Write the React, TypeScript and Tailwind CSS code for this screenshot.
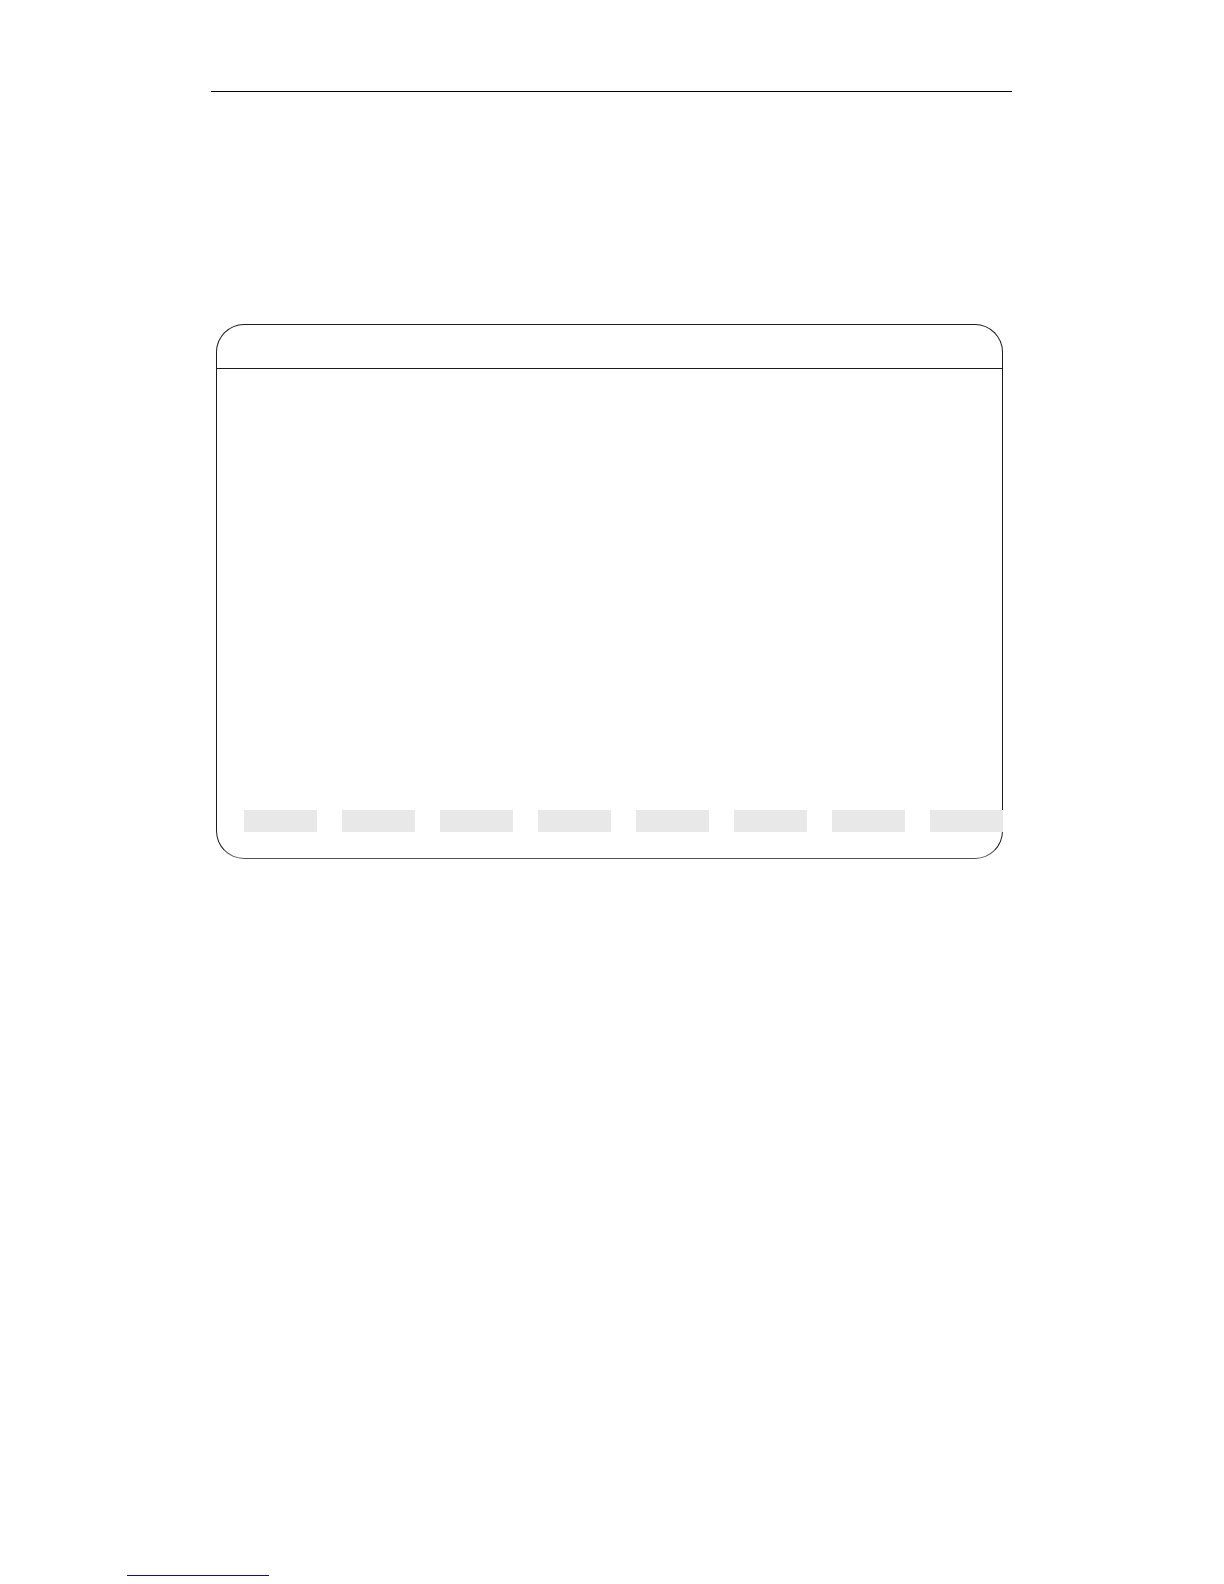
const softkeys = [1, 2, 3, 4, 5, 6, 7, 8];

const Softkeys = () => {
  return (
    <nav
      aria-label="Softkeys"
      className="relative -mr-px mb-[26px] ml-[27px] flex justify-between"
    >
      {softkeys.map((key) => (
        <button
          key={key}
          type="button"
          aria-label={`Softkey ${key}`}
          className="h-[22px] w-[73px] bg-[#e8e8e8]"
        ></button>
      ))}
    </nav>
  );
};

const Screen = () => {
  return (
    <section className="mt-[232px] mr-[9px] ml-[5px] flex h-[535px] flex-col rounded-[28px] border border-[#1c1c1c] border-b-[#505050]">
      {/* Title bar */}
      <header className="h-11 border-b border-[#1c1c1c]"></header>
      {/* Display area */}
      <div className="grow"></div>
      <Softkeys />
    </section>
  );
};

const App = () => {
  return (
    <div className="flex min-h-screen flex-col bg-white font-['Liberation_Sans',sans-serif]">
      <main className="grow pt-[91px] pr-[212px] pl-[211px]">
        <hr className="border-t border-black" />
        <Screen />
      </main>
      <footer className="pb-2 pl-[127px]">
        <a
          href="#top"
          aria-label="Back to top"
          className="block h-4 w-[142px] border-b border-[#10108a]"
        ></a>
      </footer>
    </div>
  );
};

export default App;
